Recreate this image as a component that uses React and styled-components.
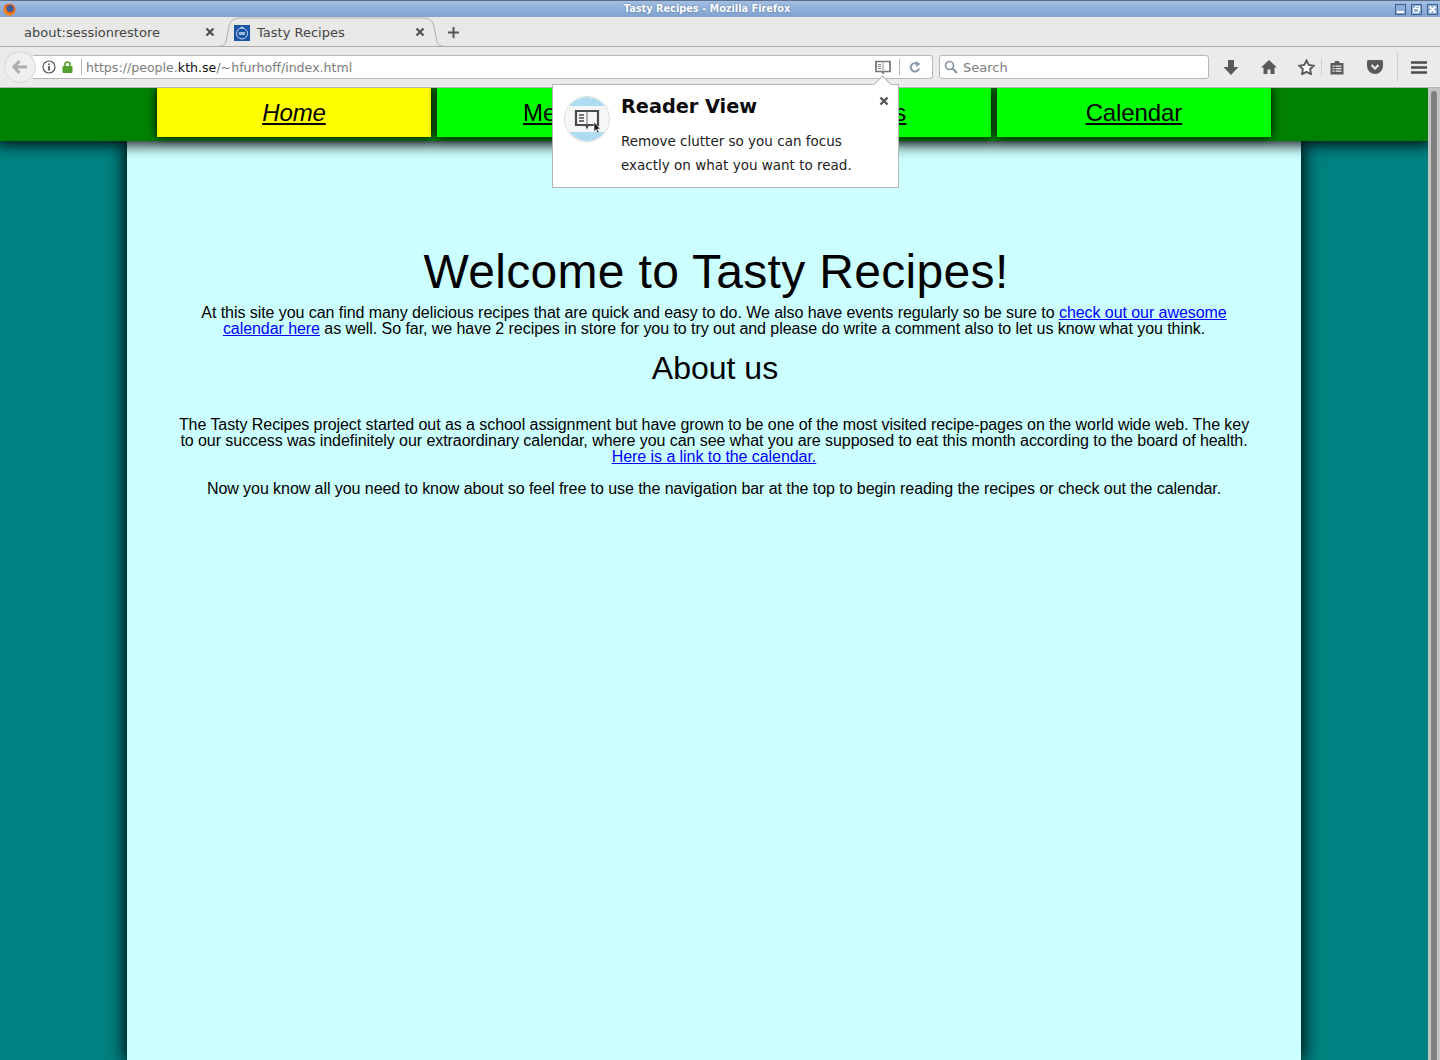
import React from 'react';
import styled, { createGlobalStyle } from 'styled-components';

const Global = createGlobalStyle`
  html, body { margin: 0; padding: 0; height: 1060px; overflow: hidden; background: #e8e8e7; }
  * { box-sizing: border-box; }
`;
const Window = styled.div`
  width: 1440px; height: 1060px; display: flex; flex-direction: column; overflow: hidden; position: relative;
  font-family: "DejaVu Sans", sans-serif;
`;
const TitleBar = styled.div`
  height: 17px; flex: none; display: flex; align-items: center; padding: 0 3px 0; position: relative;
  background: linear-gradient(#a3bfe2, #7fa2d0); border-top: 1px solid #5b6f8c;
`;
const TitleText = styled.div`
  flex: 1; text-align: center; color: #fff; font-size: 9.75px; font-weight: 700; padding: 0 0 2px 3px;
  text-shadow: 0 0 2px #4c6a96; white-space: nowrap; line-height: 13px;
`;
const WinButtons = styled.div`display: flex; gap: 5px; align-items: center; margin-right: -1px;`;
const TabBar = styled.div`
  height: 30px; flex: none; display: flex; align-items: stretch; position: relative; background: #e8e8e7;
  border-bottom: 1px solid #a9a9a9;
`;
const Tab = styled.div`
  width: ${p => p.$w}px; display: flex; align-items: center; font-size: 13px; color: #454545; position: relative;
  padding: 1px 0 0 ${p => p.$pl}px;
  height: ${p => p.$active ? '30px' : 'auto'};
`;
const TabShape = styled.svg`position: absolute; left: 0; top: 0;`;
const TabContent = styled.span`position: relative; display: flex; align-items: center; gap: 7px;`;
const TabClose = styled.span`position: absolute; right: ${p => p.$r}px; top: 10px; display: flex;`;
const NewTab = styled.div`margin-left: 4px; padding-top: 2px; display: flex; align-items: center;`;
const Toolbar = styled.div`
  height: 41px; flex: none; display: flex; align-items: center; background: #ecebea; border-bottom: 1px solid #b4b4b4; position: relative;
`;
const BackButton = styled.div`
  width: 32px; height: 32px; border-radius: 50%; background: #efefee; border: 1px solid #d6d6d6; margin-left: 4px; z-index: 1;
  display: flex; align-items: center; justify-content: center; flex: none;
`;
const UrlBar = styled.div`
  width: 900px; height: 24px; margin-left: -3px; background: #fff; border: 1px solid #b7b7b7; border-left: none; border-radius: 0 3px 3px 0;
  display: flex; align-items: center; padding-left: 9px; font-size: 12.6px; color: #7c7c7c; flex: none;
`;
const Strong = styled.span`color: #111;`;
const Divider = styled.span`width: 1px; height: 16px; background: #b9b9b9; margin: ${p => p.$m}; flex: none;`;
const UrlText = styled.span`flex: 1; white-space: nowrap;`;
const SearchBar = styled.div`
  width: 270px; height: 24px; margin-left: 6px; background: #fff; border: 1px solid #b7b7b7; border-radius: 3px;
  display: flex; align-items: center; padding-left: 4px; gap: 5px; font-size: 13px; color: #7d7d7d; flex: none;
`;
const ToolIcons = styled.div`display: flex; align-items: center; flex: 1; padding-left: 14px; `;
const ToolIcon = styled.span`width: ${p => p.$w}px; display: flex; flex: none;`;
const ToolSep = styled.span`width: 1px; height: ${p => p.$h}px; background: #d2d2d2; flex: none; margin-right: ${p => p.$mr}px;`;
const Page = styled.div`flex: 1; min-height: 0; display: flex;`;
const Viewport = styled.div`flex: 1; min-width: 0; background: #008080; position: relative; overflow: hidden; display: flex; flex-direction: column;`;
const Scrollbar = styled.div`width: 12px; flex: none; background: #c4c4c4; padding: 3px 3px 0 3px;`;
const Thumb = styled.div`height: 100%; background: #808080; border-radius: 3px 3px 0 0; width: 6px;`;
const NavBar = styled.nav`
  height: 53px; flex: none; background: #008000; box-shadow: 0 0 14px 3px #000; position: relative; z-index: 2;
  display: flex; gap: 5.400px; padding-left: 156.700px; align-items: flex-start;
`;
const NavItem = styled.a`
  width: 274.600px; height: 48.700px; background: ${p => p.$current ? '#ffff00' : '#00ff00'}; box-shadow: 0 0 9px 0 #000;
  color: #000; font: ${p => p.$current ? 'italic' : 'normal'} 24px/49px "Liberation Sans", Arial, sans-serif;
  text-align: center; text-decoration: underline; flex: none; letter-spacing: -.1px;
`;
const Main = styled.main`
  width: 1174px; margin-left: 127px; flex: 1; background: #ccffff; box-shadow: 0 0 16px 2px #000;
  padding: 0 46px; font-family: "Liberation Sans", Arial, sans-serif; color: #000; text-align: center;
`;
const Title = styled.h1`font-size: 48px; font-weight: 400; line-height: 55px; margin: 103px 0 6px; padding-left: 4px; letter-spacing: .32px;`;
const Para = styled.p`font-size: 16px; line-height: 16px; margin: 0 0 ${p => p.$mb || 0}px; letter-spacing: -.06px;`;
const Sub = styled.h2`font-size: 32px; font-weight: 400; line-height: 37px; margin: 13px 0 30px; padding-left: 2px;`;
const TextLink = styled.a`color: #0000ff; text-decoration: underline;`;
const Popup = styled.div`
  position: absolute; left: 552px; top: 84px; width: 347px; height: 104px; background: #fff; border: 1px solid #b5b5b5; z-index: 5;
  color: #111;
`;
const Arrow = styled.div`
  position: absolute; left: 323px; top: -7px; width: 13px; height: 13px; background: #fff; border-left: 1px solid #b5b5b5; border-top: 1px solid #b5b5b5;
  transform: rotate(45deg);
`;
const PopIcon = styled.div`position: absolute; left: 11px; top: 11px; display: flex;`;
const PopBody = styled.div`position: absolute; left: 68px; top: 9px; width: 270px;`;
const PopTitle = styled.div`font-size: 19.300px; font-weight: 700; line-height: 25px; margin-bottom: 10px; color: #0c0c0c;`;
const PopText = styled.div`font-size: 13.500px; line-height: 24px; color: #222; white-space: nowrap;`;
const PopClose = styled.span`position: absolute; right: 9px; top: 11px; display: flex;`;

const Close = () => (
  <svg width="10" height="10" viewBox="0 0 10 10"><path d="M1.500 1.500 8.500 8.500M8.500 1.500 1.500 8.500" stroke="#555" strokeWidth="2.400" /></svg>
);
const WinBtn = ({ d }) => (
  <svg width="11" height="11" viewBox="0 0 11 11">
    <rect x=".5" y=".5" width="10" height="10" fill="#8fadd6" stroke="#3f6294" />
    {d}
  </svg>
);
const Fox = () => (
  <svg width="13" height="13" viewBox="0 0 13 13">
    <circle cx="6.500" cy="6.500" r="6" fill="#e8661e" />
    <circle cx="7" cy="5.500" r="3.500" fill="#3b5a99" />
    <path d="M.8 6c0 4 2.500 6.500 5.700 6.500s6-2.500 6-5.500c-1 3-4 4.500-6.500 3.500S2.500 7 3.200 3.500z" fill="#f0861f" />
  </svg>
);
const Kth = () => (
  <svg width="16" height="16" viewBox="0 0 16 16">
    <rect width="16" height="16" fill="#1954a6" />
    <circle cx="8" cy="8.500" r="5.500" fill="none" stroke="#cfdcf0" strokeWidth="1" />
    <rect x="5" y="7" width="6" height="3" fill="#9fbbe2" />
    <path d="M6 3l2-1.500L10 3z" fill="#dce6f5" />
  </svg>
);
const ReaderSmall = () => (
  <svg width="16" height="14" viewBox="0 0 16 14">
    <path d="M1 1.500h14v10H9L8 13l-1-1.500H1z" fill="#fff" stroke="#777" strokeWidth="1.700" />
    <path d="M8 1.500v10" stroke="#999" />
    <path d="M3 4.500h3M3 6.500h3M3 8.500h3" stroke="#888" />
  </svg>
);

export default function App() {
  return (
    <Window>
      <Global />
      <TitleBar>
        <Fox />
        <TitleText>Tasty Recipes - Mozilla Firefox</TitleText>
        <WinButtons>
          <WinBtn d={<rect x="2" y="7" width="7" height="2" fill="#fff" />} />
          <WinBtn d={<path d="M2.500 4.500h5v4h-5zM4.500 4V2.500h4v4H8" fill="none" stroke="#fff" />} />
          <WinBtn d={<path d="M2.500 2.500l6 6M8.500 2.500l-6 6" stroke="#fff" strokeWidth="2" />} />
        </WinButtons>
      </TitleBar>
      <TabBar>
        <Tab $w={220} $pl={24}>
          about:sessionrestore
          <TabClose $r={5}><Close /></TabClose>
        </Tab>
        <Tab $w={223} $pl={14} $active>
          <TabShape width="223" height="30" viewBox="0 0 223 30">
            <path d="M0 29C7 29 6 23 8 15C9 6 11 1 20 1H203C212 1 214 6 215 15C217 23 216 29 223 29Z" fill="#e8e8e7" />
            <path d="M0 29C7 29 6 23 8 15C9 6 11 1 20 1H203C212 1 214 6 215 15C217 23 216 29 223 29" fill="none" stroke="#b0b0b0" />
          </TabShape>
          <TabContent><Kth />Tasty Recipes</TabContent>
          <TabClose $r={18}><Close /></TabClose>
        </Tab>
        <NewTab>
          <svg width="13" height="13" viewBox="0 0 13 13"><path d="M6.500 1v11M1 6.500h11" stroke="#555" strokeWidth="2" /></svg>
        </NewTab>
      </TabBar>
      <Toolbar>
        <BackButton>
          <svg width="16" height="14" viewBox="0 0 16 14"><path d="M7.500 1 2 7l5.500 6M3 7h12" fill="none" stroke="#aeaeae" strokeWidth="3.200" /></svg>
        </BackButton>
        <UrlBar>
          <svg width="14" height="14" viewBox="0 0 14 14" style={{ flex: 'none' }}>
            <circle cx="7" cy="7" r="6" fill="none" stroke="#555" strokeWidth="1.200" />
            <path d="M7 6v4.500M7 3.500v1.500" stroke="#444" strokeWidth="1.600" />
          </svg>
          <svg width="11" height="12" viewBox="0 0 11 12" style={{ flex: 'none', marginLeft: 6 }}>
            <rect x=".5" y="5" width="10" height="7" rx="1" fill="#56a02e" />
            <path d="M3 5.500V3.500a2.500 2.500 0 0 1 5 0v2" fill="none" stroke="#56a02e" strokeWidth="1.600" />
          </svg>
          <Divider $m="0 4px 0 8px" />
          <UrlText>https://people.<Strong>kth.se</Strong>/~hfurhoff/index.html</UrlText>
          <ReaderSmall />
          <Divider $m="0 9px 0 8px" />
          <svg width="12" height="12" viewBox="0 0 12 12" style={{ flex: 'none', marginRight: 11 }}>
            <path d="M10 7.500A4.200 4.200 0 1 1 8 2.700" fill="none" stroke="#8b97a6" strokeWidth="2" />
            <path d="M7 0v6l4.500-3z" fill="#8b97a6" />
          </svg>
        </UrlBar>
        <SearchBar>
          <svg width="14" height="14" viewBox="0 0 14 14" style={{ flex: 'none' }}>
            <circle cx="5.500" cy="5.500" r="4" fill="none" stroke="#8c96a3" strokeWidth="1.700" />
            <path d="M8.500 8.500 13 13" stroke="#8c96a3" strokeWidth="2.200" />
          </svg>
          Search
        </SearchBar>
        <ToolIcons>
          <ToolIcon $w={38}>
            <svg width="16" height="15" viewBox="0 0 16 15"><path d="M5 0h6v7h4.500L8 15 .5 7H5z" fill="#5a5a5a" /></svg>
          </ToolIcon>
          <ToolIcon $w={37}>
            <svg width="16" height="14" viewBox="0 0 16 14"><path d="M8 0 0 7.500h2.500V14h4V9.500h3V14h4V7.500H16z" fill="#5a5a5a" /></svg>
          </ToolIcon>
          <ToolIcon $w={23}>
            <svg width="17" height="16" viewBox="0 0 17 16"><path d="m8.500 1.500 2.200 4.500 5 .7-3.600 3.500.9 5-4.500-2.400L4 15.200l.9-5L1.300 6.700l5-.7z" fill="#fff" stroke="#5a5a5a" strokeWidth="1.900" /></svg>
          </ToolIcon>
          <ToolSep $h={18} $mr={8} />
          <ToolIcon $w={37}>
            <svg width="14" height="15" viewBox="0 0 14 15"><path d="M.5 3h3.700l1-2h3.600l1 2h3.700v11.500H.5z" fill="#5a5a5a" /><path d="M2.500 6.200h9M2.500 8.700h9M2.500 11.200h9" stroke="#eee" strokeWidth="1.200" /><path d="M5 5.500v7" stroke="#5a5a5a" /></svg>
          </ToolIcon>
          <ToolIcon $w={30}>
            <svg width="16" height="14" viewBox="0 0 16 14"><path d="M1.500 0h13A1.500 1.500 0 0 1 16 1.500V6a8 8 0 0 1-16 0V1.500A1.500 1.500 0 0 1 1.500 0z" fill="#5a5a5a" /><path d="M4.500 5 8 8.500 11.500 5" fill="none" stroke="#eee" strokeWidth="2" /></svg>
          </ToolIcon>
          <ToolSep $h={30} $mr={13} />
          <ToolIcon $w={16}>
            <svg width="16" height="13" viewBox="0 0 16 13"><path d="M0 1.500h16M0 6.500h16M0 11.500h16" stroke="#4e4e4e" strokeWidth="2.400" /></svg>
          </ToolIcon>
        </ToolIcons>
      </Toolbar>
      <Page>
        <Viewport>
          <NavBar>
            <NavItem $current>Home</NavItem>
            <NavItem>Meatballs</NavItem>
            <NavItem>Pancakes</NavItem>
            <NavItem>Calendar</NavItem>
          </NavBar>
          <Main>
            <Title>Welcome to Tasty Recipes!</Title>
            <Para>At this site you can find many delicious recipes that are quick and easy to do. We also have events regularly so be sure to <TextLink>check out our awesome calendar here</TextLink> as well. So far, we have 2 recipes in store for you to try out and please do write a comment also to let us know what you think.</Para>
            <Sub>About us</Sub>
            <Para $mb={16}>The Tasty Recipes project started out as a school assignment but have grown to be one of the most visited recipe-pages on the world wide web. The key to our success was indefinitely our extraordinary calendar, where you can see what you are supposed to eat this month according to the board of health. <br /><TextLink>Here is a link to the calendar.</TextLink></Para>
            <Para>Now you know all you need to know about so feel free to use the navigation bar at the top to begin reading the recipes or check out the calendar.</Para>
          </Main>
        </Viewport>
        <Scrollbar><Thumb /></Scrollbar>
      </Page>
      <Popup>
        <Arrow />
        <PopIcon>
          <svg width="46" height="46" viewBox="0 0 46 46">
            <defs><clipPath id="c"><circle cx="23" cy="23" r="22" /></clipPath></defs>
            <circle cx="23" cy="23" r="22" fill="#f5f6f6" />
            <g clipPath="url(#c)">
              <rect width="46" height="9" y="1" fill="#aedcf3" />
              <rect width="46" height="9" y="36" fill="#aedcf3" />
            </g>
            <circle cx="23" cy="23" r="22.500" fill="none" stroke="#dcdcdc" />
            <path d="M12 15h22v14H24l-1 2-1-2H12z" fill="#f5f6f6" stroke="#4a4a4a" strokeWidth="2.200" />
            <path d="M23 15v14" stroke="#666" />
            <path d="M15 19h5M15 22h5M15 25h5" stroke="#4a4a4a" strokeWidth="1.300" />
            <path d="M30 26v9.500l2-2 1.500 3.500 1.500-.7-1.500-3.300h2.800z" fill="#111" stroke="#fff" strokeWidth=".6" />
          </svg>
        </PopIcon>
        <PopBody>
          <PopTitle>Reader View</PopTitle>
          <PopText>Remove clutter so you can focus</PopText>
          <PopText>exactly on what you want to read.</PopText>
        </PopBody>
        <PopClose><Close /></PopClose>
      </Popup>
    </Window>
  );
}
